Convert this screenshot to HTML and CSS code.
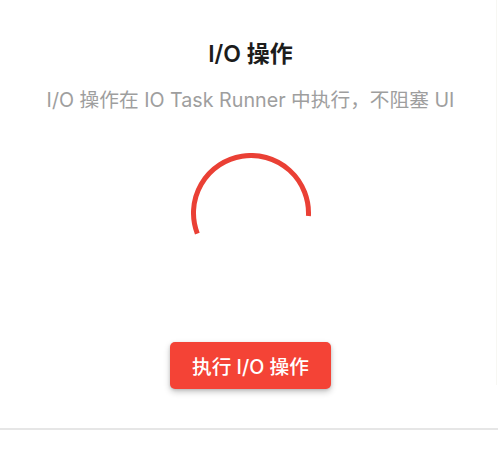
FILE: index.html
```html
<!DOCTYPE html>
<html lang="zh-CN">
<head>
<meta charset="utf-8">
<title>I/O 操作</title>
<link rel="stylesheet" href="styles.css">
</head>
<body>
<div class="page">
  <div class="card">
    <h1 class="title">I/O 操作</h1>
    <p class="subtitle">I/O 操作在 IO Task Runner 中执行，不阻塞 UI</p>
    <svg class="spinner" width="120" height="120" viewBox="0 0 120 120" aria-hidden="true">
      <path d="M6.32 80.6 A57.5 57.5 0 1 1 117.42 63.0" fill="none" stroke="#ea4035" stroke-width="5"/>
    </svg>
    <button class="btn" type="button">执行 I/O 操作</button>
  </div>
</div>
</body>
</html>
```

FILE: styles.css
```css
html, body {
  margin: 0;
  padding: 0;
  background: #ffffff;
}

body {
  font-family: "Inter", "Noto Sans CJK SC", sans-serif;
}

.page {
  position: relative;
  width: 498px;
  height: 454px;
  overflow: hidden;
}

.page::after {
  content: "";
  position: absolute;
  top: 0;
  left: 496px;
  width: 1px;
  height: 385px;
  background: #f7f7f3;
}

.card {
  box-sizing: border-box;
  height: 430px;
  padding: 39px 0 0 3px;
  display: flex;
  flex-direction: column;
  align-items: center;
  border-bottom: 2px solid #e6e6e6;
}

.title {
  margin: 0;
  font-size: 23px;
  line-height: 30px;
  font-weight: 600;
  color: #1c1c1c;
}

.subtitle {
  margin: 18px 0 0;
  font-size: 19.7px;
  line-height: 26px;
  color: #9e9e9e;
}

.spinner {
  display: block;
  margin-top: 40px;
}

.btn {
  margin-top: 69px;
  width: 161px;
  height: 47px;
  border: none;
  border-radius: 5px;
  background: #f44336;
  color: #ffffff;
  font-family: inherit;
  font-size: 19.7px;
  font-weight: 500;
  box-shadow: 0 3px 6px rgba(0, 0, 0, 0.22), 0 1px 3px rgba(0, 0, 0, 0.12);
  cursor: pointer;
}
```
